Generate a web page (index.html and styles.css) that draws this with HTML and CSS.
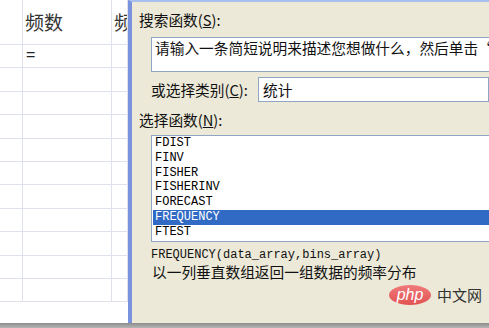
FILE: index.html
```html
<!DOCTYPE html>
<html lang="zh-CN">
<head>
    <meta charset="UTF-8">
    <title>插入函数</title>
    <link rel="stylesheet" href="styles.css">
</head>
<body>
    <div class="screen">
        <div class="main">
            <div class="sheet">
                <div class="cell head"></div>
                <div class="cell head"><span class="title">频数</span></div>
                <div class="cell head"><span class="title">频</span></div>

                <div class="cell"></div>
                <div class="cell"><span class="eq">=</span></div>
                <div class="cell"></div>

                <div class="cell"></div><div class="cell"></div><div class="cell"></div>
                <div class="cell"></div><div class="cell"></div><div class="cell"></div>
                <div class="cell"></div><div class="cell"></div><div class="cell"></div>
                <div class="cell"></div><div class="cell"></div><div class="cell"></div>
                <div class="cell"></div><div class="cell"></div><div class="cell"></div>
                <div class="cell"></div><div class="cell"></div><div class="cell"></div>
                <div class="cell"></div><div class="cell"></div><div class="cell"></div>
                <div class="cell"></div><div class="cell"></div><div class="cell"></div>
                <div class="cell"></div><div class="cell"></div><div class="cell"></div>
                <div class="cell"></div><div class="cell"></div><div class="cell"></div>
            </div>

            <div class="dialog">
                <div class="label first">搜索函数(<u>S</u>):</div>
                <div class="search">请输入一条简短说明来描述您想做什么，然后单击“转到”</div>

                <div class="category">
                    <span class="cat-label">或选择类别(<u>C</u>):</span>
                    <div class="select">统计</div>
                </div>

                <div class="label pick">选择函数(<u>N</u>):</div>
                <ul class="funcs">
                    <li>FDIST</li>
                    <li>FINV</li>
                    <li>FISHER</li>
                    <li>FISHERINV</li>
                    <li>FORECAST</li>
                    <li class="selected">FREQUENCY</li>
                    <li>FTEST</li>
                </ul>

                <div class="syntax">FREQUENCY(data_array,bins_array)</div>
                <div class="desc">以一列垂直数组返回一组数据的频率分布</div>

                <div class="watermark">
                    <span class="php">php</span>
                    <span class="cn">中文网</span>
                </div>
            </div>
        </div>
        <div class="bottom"></div>
    </div>
</body>
</html>
```

FILE: styles.css
```css
body {
    margin: 0;
    font-family: "Noto Sans CJK SC", sans-serif;
    background-color: #fff;
}

.screen {
    width: 489px;
    height: 328px;
    overflow: hidden;
    display: flex;
    flex-direction: column;
}

.main {
    flex: 1;
    display: flex;
    overflow: hidden;
}

/* spreadsheet behind the dialog */
.sheet {
    width: 128px;
    flex-shrink: 0;
    display: grid;
    grid-template-columns: 23px 89px 16px;
    grid-template-rows: 45px;
    grid-auto-rows: 23.4px;
    overflow: hidden;
    background-color: #fff;
}

.cell {
    border-right: 1px solid #dfe2ec;
    border-bottom: 1px solid #dfe2ec;
    overflow: hidden;
    white-space: nowrap;
}

.title {
    display: block;
    font-size: 19px;
    line-height: 20px;
    color: #333;
    padding: 12px 0 0 2px;
}

.eq {
    display: block;
    font-family: "Liberation Sans", sans-serif;
    font-size: 16px;
    line-height: 18px;
    color: #222;
    padding: 1px 0 0 3px;
}

/* insert function dialog */
.dialog {
    flex: 1;
    position: relative;
    background-color: #ece9d8;
    border-left: 4px solid #7a93de;
    border-top: 2px solid #a9c0ee;
    overflow: hidden;
    font-size: 14.7px;
    color: #111;
}

.label {
    line-height: 18px;
    margin-left: 7px;
    white-space: nowrap;
}

.first {
    margin-top: 9px;
}

.search {
    margin: 8px 0 0 19px;
    width: 420px;
    height: 33px;
    padding: 0 3px;
    line-height: 19px;
    background-color: #fff;
    border: 1px solid #8ea6c4;
    white-space: nowrap;
    overflow: hidden;
}

.category {
    display: flex;
    align-items: center;
    margin: 5px 0 0 19px;
    height: 25px;
}

.cat-label {
    width: 107px;
    flex-shrink: 0;
    white-space: nowrap;
    line-height: 18px;
}

.select {
    width: 300px;
    height: 23px;
    line-height: 23px;
    padding: 0 4px;
    background-color: #fff;
    border: 1px solid #8ea6c4;
}

.pick {
    margin-top: 9px;
}

.funcs {
    list-style: none;
    margin: 6px 0 0 19px;
    padding: 0;
    width: 420px;
    height: 105px;
    background-color: #fff;
    border: 1px solid #8ea6c4;
    font-family: "Liberation Mono", monospace;
    font-size: 12px;
    overflow: hidden;
}

.funcs li {
    height: 14.8px;
    line-height: 14.8px;
    padding-left: 2px;
    margin-left: 1px;
    color: #000;
}

.funcs li.selected {
    background-color: #316ac5;
    color: #fff;
}

.syntax {
    margin: 6px 0 0 19px;
    font-family: "Liberation Mono", monospace;
    font-size: 12px;
    line-height: 15px;
    white-space: nowrap;
}

.desc {
    margin: 0 0 0 20px;
    line-height: 18px;
    white-space: nowrap;
}

.watermark {
    position: absolute;
    left: 257px;
    top: 283px;
    display: flex;
    align-items: center;
    gap: 6px;
}

.php {
    width: 42px;
    height: 20px;
    border-radius: 50%;
    background: linear-gradient(#f07a7a, #e25252);
    color: #fff;
    font-family: "Liberation Sans", sans-serif;
    font-style: italic;
    font-size: 16px;
    line-height: 19px;
    text-align: center;
}

.cn {
    font-size: 15px;
    color: #333;
    line-height: 20px;
}

.bottom {
    height: 5px;
    background: linear-gradient(#8c8c8c, #b5b5b5);
}
```
